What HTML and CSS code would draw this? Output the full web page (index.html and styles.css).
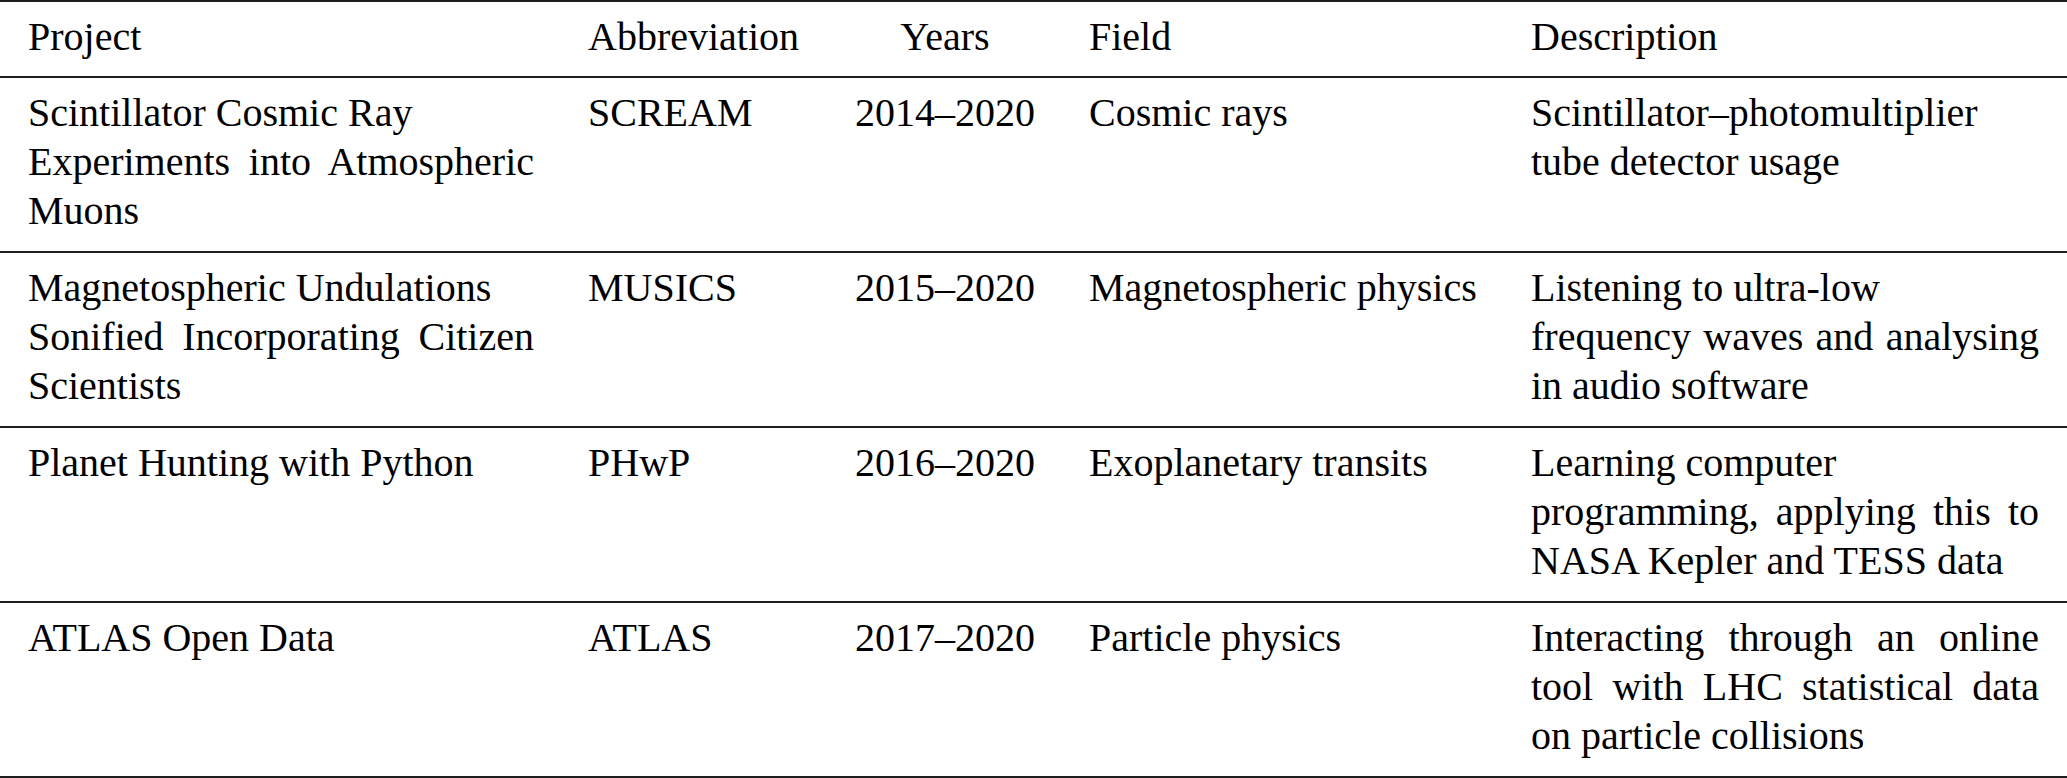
FILE: index.html
```html
<!DOCTYPE html>
<html lang="en">
<head>
    <meta charset="UTF-8">
    <meta name="viewport" content="width=device-width, initial-scale=1.0">
    <link rel="stylesheet" href="styles.css">
    <title>Projects</title>
</head>
<body>
    <table class="proyectos">
        <thead>
            <tr>
                <th class="c-proyecto">Project</th>
                <th class="c-abrev">Abbreviation</th>
                <th class="c-anios">Years</th>
                <th class="c-campo">Field</th>
                <th class="c-desc">Description</th>
            </tr>
        </thead>
        <tbody>
            <tr>
                <td class="texto">Scintillator Cosmic Ray<br>Experiments into Atmospheric Muons</td>
                <td>SCREAM</td>
                <td class="anios">2014–2020</td>
                <td>Cosmic rays</td>
                <td class="texto">Scintillator–photomultiplier tube detector usage</td>
            </tr>
            <tr>
                <td class="texto">Magnetospheric Undulations<br>Sonified Incorporating Citizen Scientists</td>
                <td>MUSICS</td>
                <td class="anios">2015–2020</td>
                <td>Magnetospheric physics</td>
                <td class="texto">Listening to ultra-low<br>frequency waves and analysing in audio software</td>
            </tr>
            <tr>
                <td class="texto">Planet Hunting with Python</td>
                <td>PHwP</td>
                <td class="anios">2016–2020</td>
                <td>Exoplanetary transits</td>
                <td class="texto">Learning computer<br>programming, applying this to NASA Kepler and TESS data</td>
            </tr>
            <tr>
                <td class="texto">ATLAS Open Data</td>
                <td>ATLAS</td>
                <td class="anios">2017–2020</td>
                <td>Particle physics</td>
                <td class="texto">Interacting through an online tool with LHC statistical data on particle collisions</td>
            </tr>
        </tbody>
    </table>
</body>
</html>
```

FILE: styles.css
```css
* {
    margin: 0;
    padding: 0;
    box-sizing: border-box;
}
body {
    background-color: #fff;
    color: #000;
    font-family: 'Liberation Serif', 'Times New Roman', Times, serif;
    font-size: 40px;
    line-height: 49px;
}
.proyectos {
    width: 2067px;
    table-layout: fixed;
    border-collapse: collapse;
}
.proyectos tr {
    border-bottom: 2px solid #1e1e1e;
}
.proyectos thead tr {
    border-top: 2px solid #1e1e1e;
}
th, td {
    font-weight: normal;
    text-align: left;
    vertical-align: top;
    padding: 10px 27px 16px 27px;
    white-space: nowrap;
}
th {
    padding-bottom: 15px;
}
.c-proyecto { width: 561px; }
.c-abrev { width: 267px; }
.c-anios { width: 234px; }
.c-campo { width: 442px; }
.c-desc { width: 563px; }
th:first-child, td:first-child {
    padding-left: 28px;
}
th:last-child, td:last-child {
    padding-right: 28px;
}
.c-anios, .anios {
    text-align: center;
}
.texto {
    white-space: normal;
    text-align: justify;
}
```
